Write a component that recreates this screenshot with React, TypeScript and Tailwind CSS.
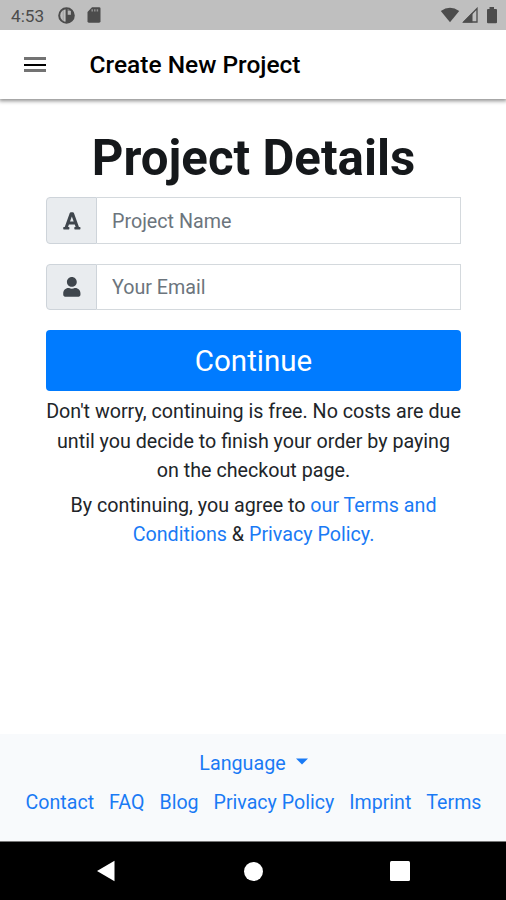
import type { ReactNode } from "react";
import { FaFont, FaUser } from "react-icons/fa";

const footerLinks = ["Contact", "FAQ", "Blog", "Privacy Policy", "Imprint", "Terms"];

function StatusBar() {
  return (
    <div className="z-10 flex h-[30px] shrink-0 items-center justify-between bg-[#bfbfbf] pr-2 pl-[11px] text-[#4c4c4c]">
      <div className="flex items-center">
        <span className="w-[47px] pt-px text-[17.2px] leading-[30px]">4:53</span>
        <svg width="17" height="17" viewBox="0 0 17 17" className="mr-3">
          <circle cx="8.5" cy="8.5" r="7.3" fill="none" stroke="currentColor" strokeWidth="2" />
          <path d="M7.6 1h2v2.6h4.6v2H15.8q.6 5-2.4 8-2.500 2.300-5.800 2.300z" fill="currentColor" />
          <path d="M9.700 4h3.200v3.800H9.700z" fill="#b5b5b5" />
          <path d="M5.200 3v11" stroke="#8a8a8a" strokeWidth="0.6" />
        </svg>
        <svg width="14" height="16" viewBox="0 0 14 16">
          <path d="M5 .3h7.2q1.3 0 1.3 1.3v12.7q0 1.4-1.4 1.4H1.9q-1.4 0-1.4-1.4V5z" fill="currentColor" />
          <path d="M5.2 2.2v2.4M7.8 2.2v2.4M10.4 2.2v2.4" stroke="#919191" strokeWidth="1.5" />
        </svg>
      </div>
      <div className="flex items-center">
        <svg width="20" height="16" viewBox="0 0 20 16" className="mr-0.5">
          <path d="M.8 4.1Q10-2.8 19.2 4.1L10 15.2z" fill="currentColor" />
        </svg>
        <svg width="16" height="16" viewBox="0 0 16 16" className="mr-2">
          <path d="M1.8 15 15 1.5V15z" fill="none" stroke="currentColor" strokeWidth="1.3" />
          <path d="M.5 15.5 10.5 5.5v10z" fill="currentColor" />
        </svg>
        <svg width="12" height="17" viewBox="0 0 12 17">
          <path d="M3.5 0h4.5v2h2q1 0 1 1v12.3q0 1-1 1H2q-1 0-1-1V3q0-1 1-1h1.5z" fill="currentColor" />
        </svg>
      </div>
    </div>
  );
}

function Field({ icon, placeholder }: { icon: ReactNode; placeholder: string }) {
  return (
    <div className="mb-5 flex h-[46.5px]">
      <div className="flex w-[51px] items-center justify-center rounded-l-[4px] border border-[#ced4da] bg-[#e9ecef] pt-px text-[#3f464d]">
        {icon}
      </div>
      <input
        placeholder={placeholder}
        className="min-w-0 flex-1 border border-l-0 border-[#d4d9dd] bg-white px-[15px] pt-[2px] text-[19.7px] outline-none placeholder:text-[#6c757d]"
      />
    </div>
  );
}

export default function App() {
  return (
    <div className="flex h-[900px] w-[506px] flex-col overflow-hidden bg-white font-[Roboto,sans-serif] text-[19.7px] leading-[29.5px] text-[#212529]">
      <StatusBar />
      <header className="flex h-[69px] shrink-0 items-center bg-white pl-6 shadow-[0_1px_4px_1px_rgba(0,0,0,0.45)]">
        <button className="flex w-[65.5px] flex-col gap-[3.5px]">
          <span className="h-[3px] w-[22px] bg-[#737373]" />
          <span className="h-[2px] w-[22px] bg-black" />
          <span className="h-[3px] w-[22px] bg-[#737373]" />
        </button>
        <h2 className="pt-px text-[24.5px] font-medium text-black">Create New Project</h2>
      </header>

      <main className="flex-1 pt-[30px] pr-[45px] pl-[46px]">
        <h1 className="mb-[9px] text-center text-[49.2px] leading-[59px] font-bold text-[#15181b]">Project Details</h1>
        <Field icon={<FaFont size={19.7} />} placeholder="Project Name" />
        <Field icon={<FaUser size={19.7} />} placeholder="Your Email" />
        <button className="h-[61px] w-full rounded-[4px] bg-[#007bff] pt-[2px] text-[29.5px] text-white">Continue</button>
        <p className="mt-[6px] text-center whitespace-nowrap">
          Don't worry, continuing is free. No costs are due
          <br />
          until you decide to finish your order by paying
          <br />
          on the checkout page.
        </p>
        <p className="mt-[5px] text-center whitespace-nowrap">
          By continuing, you agree to <a className="text-[#1a7af5]">our Terms and</a>
          <br />
          <a className="text-[#1a7af5]">Conditions</a> & <a className="text-[#1a7af5]">Privacy Policy.</a>
        </p>
      </main>

      <footer className="flex h-[107px] flex-col items-center bg-[#f8fafc] pt-[15px] pl-px text-[#1a7af5]">
        <button className="flex items-center gap-2.5">
          Language
          <svg width="12" height="7" viewBox="0 0 12 7" className="-mt-1">
            <path d="M0 .5h12L6 6.5z" fill="currentColor" />
          </svg>
        </button>
        <nav className="mt-[9px] flex gap-[15px] text-[19.6px] whitespace-nowrap">
          {footerLinks.map((link) => (
            <a key={link}>{link}</a>
          ))}
        </nav>
      </footer>

      <div className="flex h-[59px] items-center justify-between border-t border-[#777] bg-black px-24">
        <svg width="20" height="22" viewBox="0 0 20 22">
          <path d="M18.5.7v20.6L1 11z" fill="#fff" />
        </svg>
        <span className="h-[19px] w-[19px] rounded-full bg-white" />
        <span className="h-5 w-5 rounded-[1.5px] bg-white" />
      </div>
    </div>
  );
}
